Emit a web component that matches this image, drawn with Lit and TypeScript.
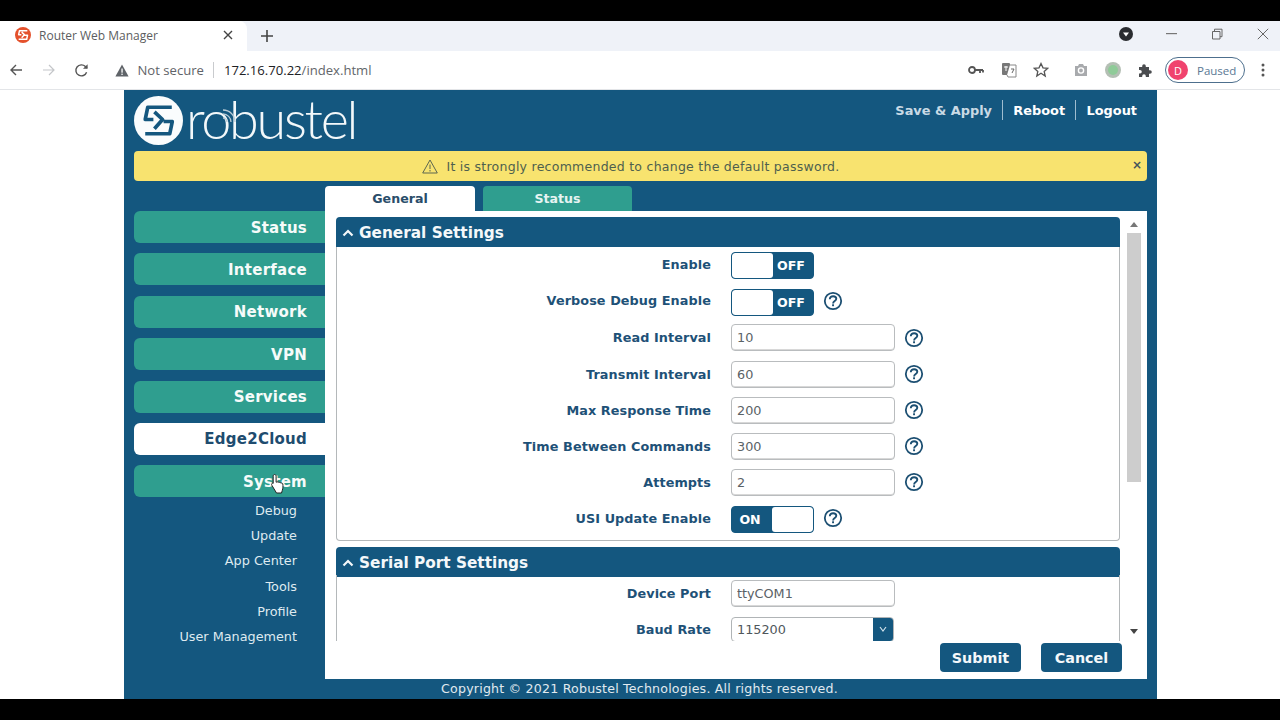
import { LitElement, html, css, svg } from "lit";
import { customElement } from "lit/decorators.js";

const help = html`<svg class="help" viewBox="0 0 20 20"><circle cx="10" cy="10" r="8.2" fill="none" stroke="#1c4f72" stroke-width="1.8"/><path d="M6.8 8.2c0-1.900 1.400-3 3.300-3s3.200 1.100 3.200 2.600c0 2.200-3.200 2.300-3.200 4.600" fill="none" stroke="#1c4f72" stroke-width="1.900"/><rect x="9.100" y="13.300" width="1.900" height="1.900" fill="#1c4f72"/></svg>`;

type Row = { label: string; kind: "off" | "on" | "input" | "select"; value?: string; help?: boolean; cls?: string };

const general: Row[] = [
  { label: "Enable", kind: "off", cls: "r1" },
  { label: "Verbose Debug Enable", kind: "off", help: true, cls: "r2" },
  { label: "Read Interval", kind: "input", value: "10", help: true, cls: "r3" },
  { label: "Transmit Interval", kind: "input", value: "60", help: true },
  { label: "Max Response Time", kind: "input", value: "200", help: true },
  { label: "Time Between Commands", kind: "input", value: "300", help: true },
  { label: "Attempts", kind: "input", value: "2", help: true },
  { label: "USI Update Enable", kind: "on", help: true, cls: "r8" },
];
const serial: Row[] = [
  { label: "Device Port", kind: "input", value: "ttyCOM1" },
  { label: "Baud Rate", kind: "select", value: "115200" },
];
const menu = ["Status", "Interface", "Network", "VPN", "Services", "Edge2Cloud", "System"];
const sub = ["Debug", "Update", "App Center", "Tools", "Profile", "User Management"];

@customElement("app-root")
export class AppRoot extends LitElement {
  static styles = css`
    :host { display: block; width: 1280px; height: 720px; background: #000; overflow: hidden; position: relative; font-family: "DejaVu Sans", Verdana, sans-serif; }
    .bar-black { height: 21px; }
    .tabstrip { height: 30px; background: #eff2f8; display: flex; align-items: stretch; font-family: "Open Sans", "Noto Sans", sans-serif; }
    .tab { width: 247px; background: #fff; border-radius: 0 8px 0 0; display: flex; align-items: center; padding: 0 0 2px 15px; box-sizing: border-box; color: #5b5d60; font-size: 12px; }
    .tab .title { margin-left: 8px; width: 184px; }
    .tab .x { width: 10px; height: 10px; }
    .plus { margin-left: 13px; align-self: center; width: 14px; height: 14px; }
    .spacer { flex: 1; }
    .strip-right { display: flex; align-items: center; padding-bottom: 4px; margin-right: -6px; }
    .dd-gap { width: 14px; }
    .ctl { width: 46px; height: 20px; display: flex; align-items: center; justify-content: center; }
    .toolbar { height: 38px; background: #fff; display: flex; align-items: center; border-bottom: 1px solid #e3e5e8; box-sizing: content-box; font-family: "Open Sans", "Noto Sans", sans-serif; }
    .navbtn { width: 32.500px; display: flex; justify-content: center; }
    .warn { margin-left: 17px; margin-right: 9px; display: flex; }
    .notsec { color: #5f6368; font-size: 13.100px; }
    .sep { width: 1px; height: 16px; background: #c9cbce; margin: 0 9.500px; }
    .url { color: #202124; font-size: 13.100px; }
    .url span { color: #63666a; }
    .tool { width: 32.500px; display: flex; justify-content: center; align-items: center; }
    .tool.gap { margin-left: 7px; }
    .pill { margin-left: 3px; width: 80px; height: 26px; box-sizing: border-box; border: 1px solid #4d6f8d; border-radius: 13px; display: flex; align-items: center; padding-left: 2px; color: #5a7894; font-size: 11.500px; }
    .avatar { width: 20px; height: 20px; border-radius: 50%; background: #f0436e; color: #fff; display: flex; align-items: center; justify-content: center; font-size: 11px; margin-right: 9px; }
    .dots { width: 35px; display: flex; justify-content: center; }

    .page { height: 609px; background: #fff; padding-left: 124px; }
    .wrap { width: 1033px; height: 609px; background: #14577f; display: flex; flex-direction: column; box-sizing: border-box; padding: 0 10px; position: relative; }
    .head { height: 61px; display: flex; align-items: flex-start; }
    .logo { display: flex; align-items: flex-start; margin-top: 6px; position: relative; }
    .logo svg.mark { width: 49px; height: 49px; }
    .word { color: #f3f8fa; font-family: Lato, sans-serif; font-weight: 300; font-size: 54px; line-height: 49px; letter-spacing: -2.300px; margin-left: 3px; margin-top: -2px; height: 49px; }
    .arcs { position: absolute; left: 86px; top: 11px; width: 18px; height: 18px; }
    .links { margin-left: auto; margin-right: 10px; margin-top: 10px; display: flex; align-items: center; color: #fff; font-weight: 700; font-size: 12.900px; height: 20px; }
    .links .dim { color: #c9dae5; }
    .links i { width: 1px; height: 20px; background: #9fbdd0; margin: 0 10.200px; }
    .banner { height: 30px; background: #f8e36f; border-radius: 4px; flex: none; display: flex; align-items: center; justify-content: center; color: #4e5f4e; font-size: 12.500px; letter-spacing: 0.260px; position: relative; padding-right: 19px; }
    .banner svg { margin-right: 8px; }
    .banner .close { position: absolute; right: 5px; top: 7px; font-weight: 700; font-size: 12px; color: #44545c; letter-spacing: 0; }
    .main { display: flex; margin-top: 5px; height: 493px; flex: none; }
    .side { width: 191px; padding-top: 25px; display: flex; flex-direction: column; flex: none; }
    .item { height: 32px; margin-bottom: 10.400px; background: #2f9e8f; border-radius: 6px 0 0 6px; display: flex; align-items: center; justify-content: flex-end; padding: 1px 18px 0 0; box-sizing: border-box; color: #f6fbfa; font-weight: 700; font-size: 15px; letter-spacing: 0.250px; flex: none; }
    .item.active { background: #fff; color: #1e4c6f; }
    .subs { margin-top: -10.400px; }
    .subitem { height: 25.400px; display: flex; align-items: center; justify-content: flex-end; padding-right: 28px; color: #dfeaf0; font-size: 12.800px; }
    .right { flex: 1; display: flex; flex-direction: column; min-width: 0; }
    .tabs { display: flex; height: 25px; flex: none; }
    .t { width: 150px; display: flex; align-items: center; justify-content: center; font-weight: 700; font-size: 12.600px; border-radius: 4px 4px 0 0; background: #fff; color: #2a4d6a; }
    .t.off { background: #2f9e8f; color: #e6f4f2; margin-left: 8px; width: 149px; }
    .content { background: #fff; flex: 1; padding: 6px 0 0 11px; display: flex; flex-direction: column; min-height: 0; }
    .scrollwrap { display: flex; height: 424px; flex: none; }
    .scroll { width: 784px; height: 424px; overflow: hidden; flex: none; }
    .sbar { width: 15px; margin-left: 6px; display: flex; flex-direction: column; align-items: center; }
    .up { width: 0; height: 0; border: 4px solid transparent; border-top: 0; border-bottom: 5px solid #777; margin-top: 5px; }
    .thumb { width: 14px; height: 249px; background: #cdcdcd; margin-top: 6px; }
    .down { width: 0; height: 0; border: 4px solid transparent; border-bottom: 0; border-top: 5px solid #444; margin-top: auto; margin-bottom: 7px; }
    .sect + .sect { margin-top: 6px; }
    .shead { height: 30px; box-sizing: border-box; padding: 1px 0 0 6px; background: #14577f; border-radius: 4px 4px 0 0; color: #f4f8fa; font-weight: 700; font-size: 15.300px; display: flex; align-items: center; }
    .shead svg { margin-right: 5px; }
    .sbody { border: 1px solid #b4b8ba; border-top: 0; border-radius: 0 0 4px 4px; padding: 0 0 4px; }
    .sbody.open { border-bottom: 0; border-radius: 0; padding: 0; }
    .sbody.open .rows { margin-top: -2px; }
    .row { height: 36px; display: grid; grid-template-columns: 374px auto; align-items: center; column-gap: 20px; }
    .row.r1 { height: 35px; }
    .row.r2 { height: 37px; }
    .row.r3 { height: 37px; }
    .label { text-align: right; color: #1e5177; font-weight: 700; font-size: 12.800px; letter-spacing: 0.080px; white-space: nowrap; }
    .ctrl { display: flex; align-items: center; }
    .help { width: 20px; height: 20px; flex: none; margin-left: 9px; }
    input { width: 164px; height: 27px; box-sizing: border-box; border: 1px solid #b9bcbe; border-radius: 4px; padding: 0 5px; font: 12.800px "DejaVu Sans", Verdana, sans-serif; color: #5a6266; background: #fff; outline: none; box-shadow: inset 0 -1px 0 #d8d8d8; }
    .toggle { width: 83px; height: 27px; box-sizing: border-box; border: 1px solid #14577f; border-radius: 4px; background: #14577f; display: flex; overflow: hidden; color: #fff; font-weight: 700; font-size: 12.600px; }
    .toggle .knob { width: 41px; background: #fff; border-radius: 3px; }
    .toggle .lbl { flex: 1; display: flex; align-items: center; justify-content: center; padding-right: 4px; }
    .r1 .toggle { margin-top: 1px; }
    .r2 .toggle { margin-top: 4px; }
    .r8 .toggle { margin-top: 2px; }
    .select { width: 163px; height: 25px; box-sizing: border-box; border: 1px solid #b0b4b6; border-radius: 4px; display: flex; align-items: center; padding-left: 5px; font-size: 12.800px; color: #4f575b; overflow: hidden; }
    .select .val { flex: 1; }
    .select .arrow { width: 20px; height: 25px; background: #14577f; display: flex; align-items: center; justify-content: center; }
    .actions { display: flex; justify-content: flex-end; gap: 20px; margin-top: 2px; padding-right: 25px; }
    .btn { width: 81px; height: 29px; background: #14577f; border-radius: 4px; color: #f4f8fa; font-weight: 700; font-size: 14.300px; display: flex; align-items: center; justify-content: center; }
    .foot { height: 20px; box-sizing: border-box; padding-bottom: 2px; display: flex; align-items: center; justify-content: center; color: #e0eaf0; font-size: 12.600px; letter-spacing: 0.200px; margin-left: -2px; flex: none; }
    .cursor { position: absolute; left: 270px; top: 473px; width: 16px; height: 22px; }
  `;

  private ctrl(r: Row) {
    if (r.kind === "off") return html`<div class="toggle"><div class="knob"></div><div class="lbl">OFF</div></div>`;
    if (r.kind === "on") return html`<div class="toggle"><div class="lbl">ON</div><div class="knob"></div></div>`;
    if (r.kind === "select")
      return html`<div class="select"><span class="val">${r.value}</span><span class="arrow"><svg width="8" height="6" viewBox="0 0 8 6"><path d="M1 1l3 4 3-4" fill="none" stroke="#cfe0ea" stroke-width="1.200"/></svg></span></div>`;
    return html`<input .value=${r.value ?? ""} />`;
  }
  private rows(list: Row[]) {
    return html`<div class="rows">${list.map(
      (r) => html`<div class="row ${r.cls ?? ""}"><div class="label">${r.label}</div><div class="ctrl">${this.ctrl(r)}${r.help ? help : ""}</div></div>`
    )}</div>`;
  }
  private chev() {
    return html`<svg width="12" height="8" viewBox="0 0 12 8"><path d="M1.500 6.500L6 2l4.500 4.500" fill="none" stroke="#f4f8fa" stroke-width="2.200"/></svg>`;
  }

  render() {
    return html`
      <div class="bar-black"></div>
      <div class="tabstrip">
        <div class="tab">
          <svg width="16" height="16" viewBox="0 0 48 48"><circle cx="24" cy="24" r="24" fill="#e4512c"/><path d="M37 11H13.500L11 23H19M20 15.500L28 23L20 32M11 37H35L37.500 25H29" fill="none" stroke="#fff" stroke-width="4.500" stroke-linejoin="round"/></svg>
          <span class="title">Router Web Manager</span>
          <svg class="x" viewBox="0 0 10 10"><path d="M1 1l8 8M9 1l-8 8" stroke="#444" stroke-width="1.400"/></svg>
        </div>
        <svg class="plus" viewBox="0 0 14 14"><path d="M7 1v12M1 7h12" stroke="#444" stroke-width="1.600"/></svg>
        <div class="spacer"></div>
        <div class="strip-right">
          <svg width="16" height="16" viewBox="0 0 16 16"><circle cx="8" cy="8" r="7" fill="#2a2c30"/><path d="M5 6.500h6L8 10.500z" fill="#fff"/></svg>
          <div class="dd-gap"></div>
          <div class="ctl"><svg width="11" height="2" viewBox="0 0 11 2"><rect width="11" height="1.200" fill="#777"/></svg></div>
          <div class="ctl"><svg width="12" height="12" viewBox="0 0 12 12"><path d="M1.500 3.500h7.500v7.500H1.500zM3.500 3.500V1.200H11v7.500H9" fill="none" stroke="#666" stroke-width="1"/></svg></div>
          <div class="ctl"><svg width="12" height="12" viewBox="0 0 12 12"><path d="M.8.8l10.400 10.400M11.200.8L.8 11.200" stroke="#666" stroke-width="1"/></svg></div>
        </div>
      </div>
      <div class="toolbar">
        <div class="navbtn"><svg width="14" height="14" viewBox="0 0 14 14"><path d="M13 7H2M7 2L2 7l5 5" fill="none" stroke="#555" stroke-width="1.400"/></svg></div>
        <div class="navbtn"><svg width="14" height="14" viewBox="0 0 14 14"><path d="M1 7h11M7 2l5 5-5 5" fill="none" stroke="#c4c6c9" stroke-width="1.200"/></svg></div>
        <div class="navbtn"><svg width="15" height="15" viewBox="0 0 15 15"><path d="M12.600 9.200A5.500 5.500 0 1 1 11.400 3.600L13 5" fill="none" stroke="#555" stroke-width="1.400"/><path d="M13.600 1.200v4.600H9z" fill="#555"/></svg></div>
        <div class="warn"><svg width="14" height="13" viewBox="0 0 14 13"><path d="M7 0.500L13.600 12.500H.4z" fill="#5f6368"/><rect x="6.400" y="4.500" width="1.300" height="4.200" fill="#fff"/><rect x="6.400" y="9.600" width="1.300" height="1.400" fill="#fff"/></svg></div>
        <span class="notsec">Not secure</span>
        <div class="sep"></div>
        <span class="url">172.16.70.22<span>/index.html</span></span>
        <div class="spacer"></div>
        <div class="tool"><svg width="16" height="10" viewBox="0 0 16 10"><circle cx="4" cy="5" r="3" fill="none" stroke="#555" stroke-width="1.800"/><path d="M7 5h8M12 5v3M15 5v2.500" stroke="#555" stroke-width="1.800" fill="none"/></svg></div>
        <div class="tool"><svg width="16" height="16" viewBox="0 0 16 16"><rect x="1" y="1" width="8" height="12" rx="1" fill="#777"/><path d="M9 3h6v12H7l-1-2" fill="#fff" stroke="#888"/><path d="M3 5h4M5 4v5" stroke="#fff"/><path d="M10 7h3M11 11l2-4" stroke="#666"/></svg></div>
        <div class="tool"><svg width="16" height="16" viewBox="0 0 16 16"><path d="M8 1.500l2 4.300 4.700.5-3.500 3.200 1 4.600L8 11.300l-4.200 2.800 1-4.600L1.300 6.300 6 5.800z" fill="none" stroke="#555" stroke-width="1.300"/></svg></div>
        <div class="tool gap"><svg width="14" height="14" viewBox="0 0 14 14"><path d="M1 3h3l1-2h4l1 2h3v10H1z" fill="#a8aaad"/><circle cx="7" cy="7.500" r="2.600" fill="none" stroke="#fff" stroke-width="1.400"/></svg></div>
        <div class="tool"><svg width="16" height="16" viewBox="0 0 16 16"><circle cx="8" cy="8" r="8" fill="#b4bfb4"/><circle cx="8" cy="8" r="5" fill="#8fcb98"/></svg></div>
        <div class="tool"><svg width="15" height="15" viewBox="0 0 15 15"><path d="M1 4h3.200V3a1.800 1.800 0 0 1 3.600 0v1H11v3.200h1a1.800 1.800 0 0 1 0 3.600h-1V14H7.800v-1a1.800 1.800 0 0 0-3.600 0v1H1v-3.500h1a1.800 1.800 0 0 0 0-3.600H1z" fill="#4a4c4f"/></svg></div>
        <div class="pill"><div class="avatar">D</div>Paused</div>
        <div class="dots"><svg width="4" height="14" viewBox="0 0 4 14"><circle cx="2" cy="2" r="1.500" fill="#555"/><circle cx="2" cy="7" r="1.500" fill="#555"/><circle cx="2" cy="12" r="1.500" fill="#555"/></svg></div>
      </div>
      <div class="page">
        <div class="wrap">
          <div class="head">
            <div class="logo">
              <svg class="mark" viewBox="0 0 48 48"><circle cx="24" cy="24" r="24" fill="#fafcfd"/><path d="M37 11H13.500L11 23H19M20 15.500L28 23L20 32M11 37H35L37.500 25H29" fill="none" stroke="#14577f" stroke-width="3.600" stroke-linejoin="round"/></svg>
              <div class="word">robustel</div>
              <svg class="arcs" viewBox="0 0 18 18">${svg`<path d="M3 3a12 12 0 0 1 12 12M3 7a8 8 0 0 1 8 8M3 11a4 4 0 0 1 4 4" fill="none" stroke="#b8cad6" stroke-width="1.300"/>`}</svg>
            </div>
            <div class="links"><span class="dim">Save &amp; Apply</span><i></i><span>Reboot</span><i></i><span>Logout</span></div>
          </div>
          <div class="banner">
            <svg width="16" height="15" viewBox="0 0 16 15"><path d="M8 1L15.300 14H.7z" fill="none" stroke="#5c6650" stroke-width="1"/><path d="M8 5.500v4.500M8 11v1.500" stroke="#5c6650" stroke-width="1"/></svg>
            It is strongly recommended to change the default password.
            <span class="close">×</span>
          </div>
          <div class="main">
            <div class="side">
              ${menu.map((m) => html`<div class="item ${m === "Edge2Cloud" ? "active" : ""}">${m}</div>`)}
              <div class="subs">${sub.map((s) => html`<div class="subitem">${s}</div>`)}</div>
            </div>
            <div class="right">
              <div class="tabs"><div class="t">General</div><div class="t off">Status</div></div>
              <div class="content">
                <div class="scrollwrap">
                  <div class="scroll">
                    <div class="sect"><div class="shead">${this.chev()}General Settings</div><div class="sbody">${this.rows(general)}</div></div>
                    <div class="sect"><div class="shead">${this.chev()}Serial Port Settings</div><div class="sbody open">${this.rows(serial)}</div></div>
                  </div>
                  <div class="sbar"><div class="up"></div><div class="thumb"></div><div class="down"></div></div>
                </div>
                <div class="actions"><div class="btn">Submit</div><div class="btn">Cancel</div></div>
              </div>
            </div>
          </div>
          <div class="foot">Copyright © 2021 Robustel Technologies. All rights reserved.</div>
        </div>
      </div>
      <svg class="cursor" viewBox="0 0 16 22"><path d="M4.500 1.500c1 0 1.600.7 1.600 1.700v6l1-.3c.8-.2 1.500 0 1.800.6.800-.3 1.600-.1 1.900.6.800-.3 1.700 0 2 .8.300 2 .2 4.500-.5 6.500l-.8 2.600H6.500L2 12.500c-.6-.8-.5-1.700.2-2.200.6-.4 1.200-.2 1 0V3.200c0-1 .4-1.700 1.300-1.700z" fill="#fff" stroke="#222" stroke-width="1"/></svg>
    `;
  }
}
